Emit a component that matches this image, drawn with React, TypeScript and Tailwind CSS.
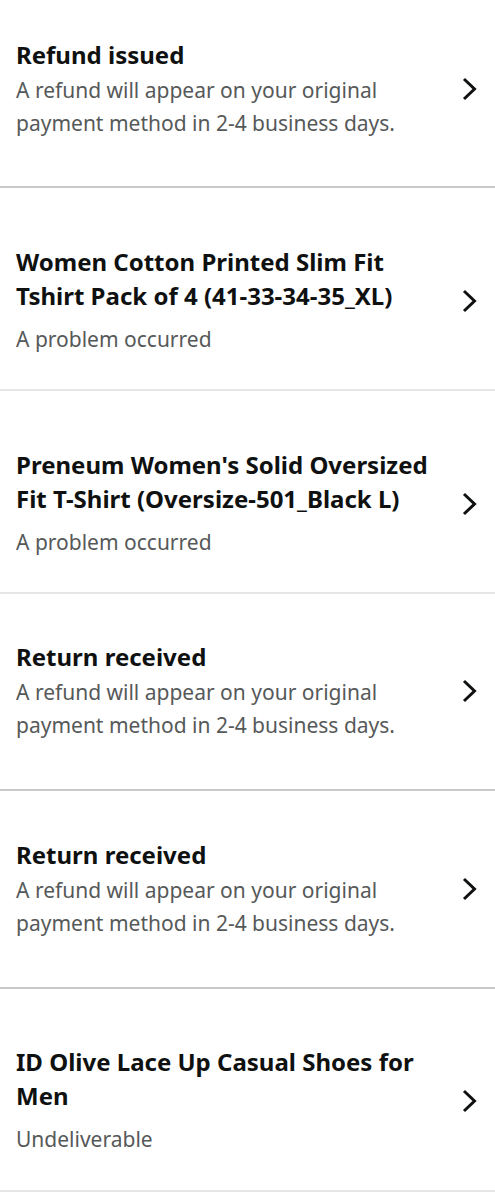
interface Row {
  title: string
  sub: string
  kind: 'status' | 'item'
  top: string
  bottom: string
  divider: string
}

const rows: Row[] = [
  {
    title: 'Refund issued',
    sub: 'A refund will appear on your original payment method in 2-4 business days.',
    kind: 'status',
    top: 'pt-[38px]',
    bottom: 'pb-[46px]',
    divider: 'border-b-2 border-[#c9c9c9]',
  },
  {
    title: 'Women Cotton Printed Slim Fit Tshirt Pack of 4 (41-33-34-35_XL)',
    sub: 'A problem occurred',
    kind: 'item',
    top: 'pt-[57px]',
    bottom: 'pb-[33px]',
    divider: 'border-b-2 border-[#e6e6e6]',
  },
  {
    title: "Preneum Women's Solid Oversized Fit T-Shirt (Oversize-501_Black L)",
    sub: 'A problem occurred',
    kind: 'item',
    top: 'pt-[57px]',
    bottom: 'pb-[33px]',
    divider: 'border-b-2 border-[#e6e6e6]',
  },
  {
    title: 'Return received',
    sub: 'A refund will appear on your original payment method in 2-4 business days.',
    kind: 'status',
    top: 'pt-[46px]',
    bottom: 'pb-[47px]',
    divider: 'border-b-2 border-[#c9c9c9]',
  },
  {
    title: 'Return received',
    sub: 'A refund will appear on your original payment method in 2-4 business days.',
    kind: 'status',
    top: 'pt-[47px]',
    bottom: 'pb-[47px]',
    divider: 'border-b-2 border-[#c9c9c9]',
  },
  {
    title: 'ID Olive Lace Up Casual Shoes for Men',
    sub: 'Undeliverable',
    kind: 'item',
    top: 'pt-[56px]',
    bottom: 'pb-[34px]',
    divider: 'border-b-2 border-[#e6e6e6]',
  },
]

function Chevron() {
  return (
    <svg width="16" height="24" viewBox="0 0 16 24" className="shrink-0" fill="none">
      <polyline points="3,2 13.5,12 3,22" stroke="#0f1111" strokeWidth="3" strokeLinejoin="miter" />
    </svg>
  )
}

function ListRow({ row }: { row: Row }) {
  return (
    <div className={`flex items-center pl-4 pr-[18px] ${row.top} ${row.bottom} ${row.divider}`}>
      <div className="flex-1 pr-4">
        <div className="text-[24px] leading-[34px] font-bold text-[#0f1111]">{row.title}</div>
        <div
          className={`text-[21px] leading-[33px] text-[#565959] ${
            row.kind === 'item' ? 'mt-[10px]' : 'mt-[2px]'
          }`}
        >
          {row.sub}
        </div>
      </div>
      <Chevron />
    </div>
  )
}

export default function App() {
  return (
    <div className="w-[495px] min-h-[1200px] bg-white font-['Noto_Sans',sans-serif]">
      {rows.map((row, i) => (
        <ListRow key={i} row={row} />
      ))}
    </div>
  )
}
